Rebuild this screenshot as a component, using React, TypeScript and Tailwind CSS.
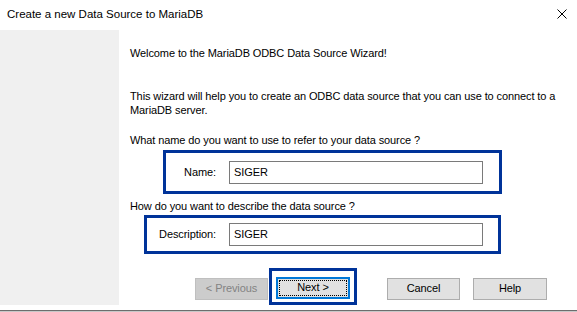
import React from 'react';

const blueBox = 'border-[3px] border-[#003399]';

function Field({ label, value, labelWidth }: { label: string; value: string; labelWidth: string }) {
    return (
        <div className="flex items-center">
            <div className={`${labelWidth} text-right`}>{label}</div>
            <div className="ml-[13px] w-[254px] h-[23px] border border-[#7a7a7a] bg-white flex items-center pl-[4px]">{value}</div>
        </div>
    );
}

export default function App() {
    return (
        <div
            className="w-[577px] h-[312px] bg-white overflow-hidden flex flex-col text-[11px] text-black tracking-[-0.1px]"
            style={{ fontFamily: '"Liberation Sans", Arial, sans-serif' }}
        >
            {/* title bar */}
            <div className="h-[30px] shrink-0 flex items-center justify-between pl-[7px] pr-[10px]">
                <span className="text-[11.5px] tracking-normal">Create a new Data Source to MariaDB</span>
                <svg width="10" height="10" viewBox="0 0 10 10" className="mt-[-2px]">
                    <path d="M0.5 0.5 L9.5 9.5 M9.5 0.5 L0.5 9.5" stroke="#000" strokeWidth="1" fill="none" />
                </svg>
            </div>

            <div className="h-[275px] shrink-0 flex">
                <div className="w-[119px] bg-[#f0f0f0]" />
                <div className="flex-1 pl-[11px] flex flex-col">
                    <p className="mt-[17px] leading-[13px]">Welcome to the MariaDB ODBC Data Source Wizard!</p>
                    <p className="mt-[29px] leading-[14px]">
                        This wizard will help you to create an ODBC data source that you can use to connect to a
                        <br />
                        MariaDB server.
                    </p>
                    <p className="mt-[16px] leading-[14px]">What name do you want to use to refer to your data source ?</p>

                    <div className={`${blueBox} ml-[33px] mt-[3px] w-[339px] h-[44px] flex items-center`}>
                        <Field label="Name:" value="SIGER" labelWidth="w-[50px]" />
                    </div>

                    <p className="mt-[5px] leading-[14px]">How do you want to describe the data source ?</p>

                    <div className={`${blueBox} ml-[14px] mt-[2px] w-[357px] h-[39px] flex items-center`}>
                        <Field label="Description:" value="SIGER" labelWidth="w-[69px]" />
                    </div>

                    <div className="mt-[14px] flex items-center ml-[65px]">
                        <div className="w-[73px] h-[22px] bg-[#cccccc] border border-[#bfbfbf] text-[#838383] flex items-center justify-center mt-[4px]">
                            &lt; Previous
                        </div>
                        <div className={`${blueBox} ml-[1px] w-[88px] h-[37px] flex items-center justify-center`}>
                            <div className="w-[74px] h-[22px] bg-[#e1e1e1] border-2 border-[#0078d7] p-[1px] mt-[2px]">
                                <div className="w-full h-full border border-dotted border-black flex items-center justify-center">Next &gt;</div>
                            </div>
                        </div>
                        <div className="ml-[30px] w-[73px] h-[22px] bg-[#e1e1e1] border border-[#adadad] flex items-center justify-center mt-[4px]">
                            Cancel
                        </div>
                        <div className="ml-[13px] w-[74px] h-[22px] bg-[#e1e1e1] border border-[#adadad] flex items-center justify-center mt-[4px]">
                            Help
                        </div>
                    </div>
                </div>
            </div>

            <div className="h-[5px] shrink-0" />
            <div className="h-[1px] shrink-0 bg-[#6d6d6d]" />
            <div className="h-[1px] shrink-0 bg-[#c8c8c8]" />
        </div>
    );
}
